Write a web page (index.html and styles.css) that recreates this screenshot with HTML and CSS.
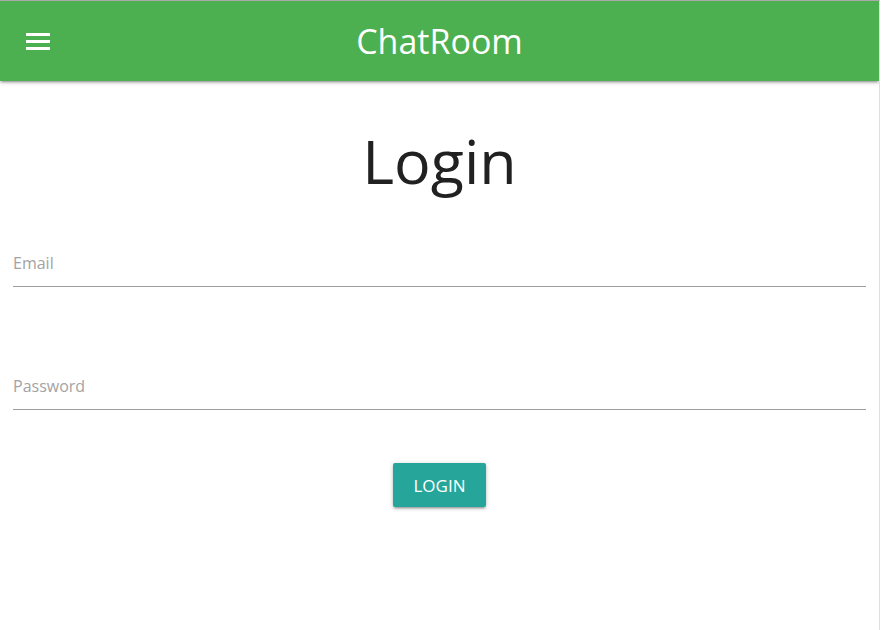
FILE: index.html
```html
<!DOCTYPE html>
<html lang="en">
<head>
<meta charset="utf-8">
<title>ChatRoom</title>
<link rel="stylesheet" href="styles.css">
</head>
<body>
<div class="page">
  <header class="nav">
    <button class="menu" aria-label="Menu">
      <svg width="24" height="18" viewBox="0 0 24 18"><rect x="0" y="0" width="24" height="3" fill="#fff"/><rect x="0" y="7" width="24" height="3" fill="#fff"/><rect x="0" y="14" width="24" height="3" fill="#fff"/></svg>
    </button>
    <div class="brand">ChatRoom</div>
    <div></div>
  </header>
  <main class="content">
    <h1 class="title">Login</h1>
    <form class="form">
      <input class="field" type="email" placeholder="Email">
      <input class="field" type="password" placeholder="Password">
      <div class="actions"><button class="btn" type="button">LOGIN</button></div>
    </form>
  </main>
</div>
</body>
</html>
```
FILE: styles.css
```css
html, body { margin: 0; padding: 0; background: #fff; }
body { font-family: "Open Sans", "Noto Sans", sans-serif; }
.page {
  width: 879px;
  height: 629px;
  border-top: 1px solid #a9a9a9;
  border-right: 1px solid #e4dfc8;
  overflow: hidden;
}
.nav {
  height: 80px;
  background: #4caf50;
  display: grid;
  grid-template-columns: 1fr auto 1fr;
  align-items: center;
  box-shadow: 0 2px 2px 0 rgba(0,0,0,.14), 0 3px 1px -2px rgba(0,0,0,.12), 0 1px 5px 0 rgba(0,0,0,.2);
  position: relative;
}
.menu {
  justify-self: start;
  background: none; border: 0; padding: 0;
  margin-left: 26px; margin-top: 2px;
  display: flex;
}
.brand {
  color: #fff;
  font-size: 34px;
  line-height: 80px;
}
.content { padding: 0 13px; }
.title {
  margin: 25px 0 0;
  text-align: center;
  font-weight: 400;
  font-size: 61px;
  line-height: 110px;
  color: #212121;
}
.form { display: flex; flex-direction: column; margin-top: 25px; }
.field {
  font-family: inherit;
  font-size: 16px;
  height: 44px;
  padding: 0 0 1px;
  border: 0;
  border-bottom: 1px solid #9e9e9e;
  outline: none;
  background: transparent;
  color: #212121;
}
.field + .field { margin-top: 77px; }
.field::placeholder { color: #a3a3a3; }
.actions { display: flex; justify-content: center; margin-top: 53px; }
.btn {
  font-family: inherit;
  font-size: 17px;
  color: #fff;
  background: #26a69a;
  border: 0;
  border-radius: 2px;
  height: 44px;
  padding: 0 20px;
  box-shadow: 0 2px 2px 0 rgba(0,0,0,.14), 0 3px 1px -2px rgba(0,0,0,.12), 0 1px 5px 0 rgba(0,0,0,.2);
}
```
